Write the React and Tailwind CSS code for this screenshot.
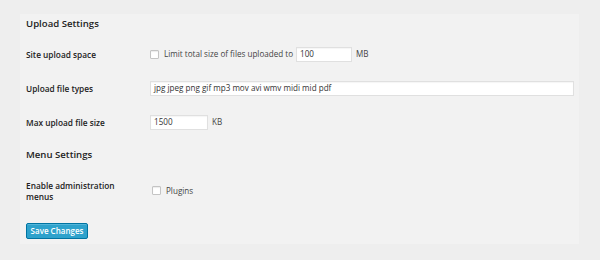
import React from "react";

const font = { fontFamily: '"Open Sans", "Noto Sans", sans-serif' };

function Checkbox() {
  return (
    <span className="inline-block w-[9px] h-[9px] bg-white border border-[#c4c4c4] rounded-[1px] shadow-[inset_0_1px_1px_rgba(0,0,0,0.08)] shrink-0" />
  );
}

function Row({ label, children, className = "" }) {
  return (
    <div className={`flex items-center ${className}`}>
      <div className="w-[124px] shrink-0 text-[8.3px] leading-[11px] font-semibold text-[#222]">{label}</div>
      <div className="flex items-center">{children}</div>
    </div>
  );
}

function TextInput({ value, className = "" }) {
  return (
    <div className={`h-[15px] bg-white border border-[#e0e0e0] shadow-[inset_0_1px_1px_rgba(0,0,0,0.04)] flex items-center pl-[3px] text-[8.1px] text-[#333] ${className}`}>
      {value}
    </div>
  );
}

export default function App() {
  return (
    <div className="w-[600px] h-[260px] bg-[#eeeeee] pt-[14px] pl-[20px] pr-[21px]" style={font}>
      <div className="bg-[#f2f2f2] h-[230px] pl-[6px] flex flex-col">
        <div className="h-[19px] leading-[19px] text-[9.6px] font-semibold text-[#222]">Upload Settings</div>
        <Row label="Site upload space" className="mt-[13px] h-[16px]">
          <Checkbox />
          <span className="ml-[5px] text-[8.1px] text-[#444]">Limit total size of files uploaded to</span>
          <TextInput value="100" className="ml-[3px] w-[56px]" />
          <span className="ml-[4px] text-[8.1px] text-[#444]">MB</span>
        </Row>
        <Row label="Upload file types" className="mt-[18px] h-[16px]">
          <TextInput value="jpg jpeg png gif mp3 mov avi wmv midi mid pdf" className="w-[424px]" />
        </Row>
        <Row label="Max upload file size" className="mt-[18px] h-[16px]">
          <TextInput value="1500" className="w-[58px]" />
          <span className="ml-[4px] text-[8.1px] text-[#444]">KB</span>
        </Row>
        <div className="mt-[16px] h-[18px] leading-[18px] text-[9.6px] font-semibold text-[#222]">Menu Settings</div>
        <Row label={<>Enable administration<br />menus</>} className="mt-[16px] h-[22px]">
          <span className="ml-[2px] flex items-center">
            <Checkbox />
            <span className="ml-[5px] text-[8.1px] text-[#444]">Plugins</span>
          </span>
        </Row>
        <div className="mt-[21px] flex">
          <button className="w-[62px] h-[16px] bg-[#2ea2cc] border border-[#0074a2] rounded-[2px] text-white text-[8px] font-semibold leading-[14px] shadow-[inset_0_1px_0_rgba(120,200,230,0.5)]">
            Save Changes
          </button>
        </div>
      </div>
    </div>
  );
}
